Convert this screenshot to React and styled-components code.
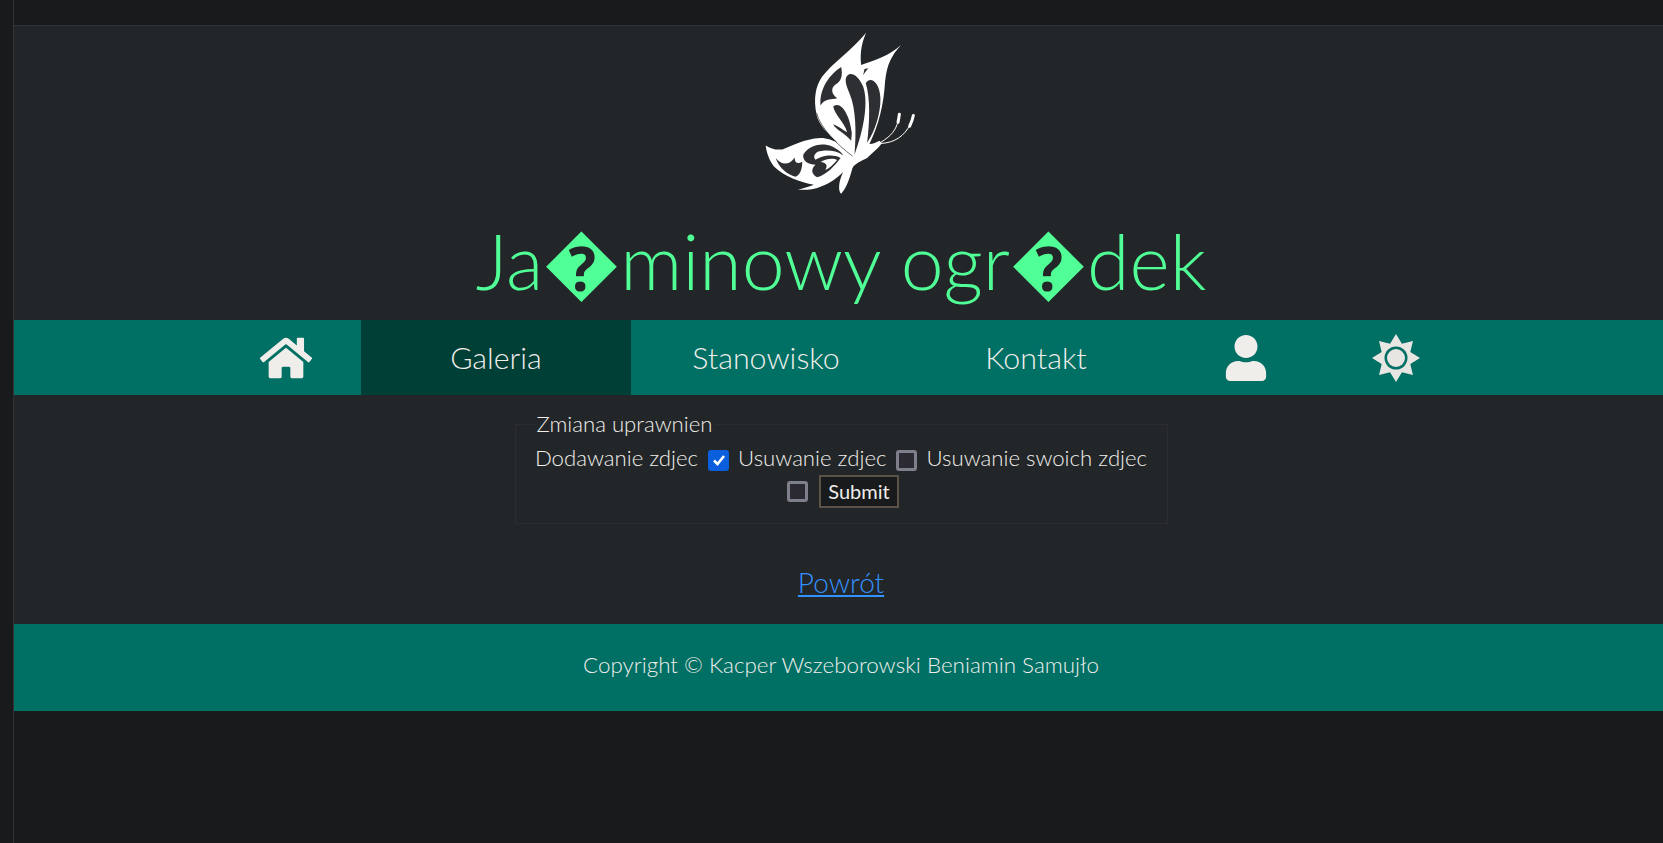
import React from 'react';
import styled, { createGlobalStyle } from 'styled-components';
import { FaHome, FaUser } from 'react-icons/fa';

const GlobalStyle = createGlobalStyle`
  html, body {
    margin: 0;
    height: 100%;
    overflow: hidden;
    background: #181a1b;
    font-family: Lato, "Liberation Sans", sans-serif;
    font-weight: 300;
    color: #e8e6e3;
  }
`;

const Frame = styled.div`
  width: 1655px;
  height: 843px;
  margin-left: 13px;
  padding-top: 25px;
  box-sizing: border-box;
  border-left: 1px solid #303436;
`;

const Page = styled.div`
  background: #222628;
  border-top: 1px solid #303436;
`;

const Header = styled.header`
  height: 294px;
  display: flex;
  flex-direction: column;
  align-items: center;
`;

const Logo = styled.svg`
  display: block;
  width: 153px;
  height: 167px;
  margin-top: 4px;
`;

const Title = styled.h1`
  margin: 17px 0 0;
  font-size: 77px;
  line-height: 92px;
  font-weight: 300;
  color: #51ff97;
  white-space: nowrap;
`;

const Nav = styled.nav`
  height: 75px;
  background: #006f64;
  display: flex;
  justify-content: center;
`;

const NavItem = styled.a`
  width: ${(p) => (p.$icon ? '150px' : '270px')};
  box-sizing: border-box;
  padding-bottom: ${(p) => (p.$icon ? '0' : '2px')};
  display: flex;
  align-items: center;
  justify-content: center;
  font-size: 30.4px;
  color: #f0eeeb;
  background: ${(p) => (p.$active ? '#003f35' : 'transparent')};
`;

const Content = styled.main`
  height: 229px;
  display: flex;
  flex-direction: column;
  align-items: center;
`;

const Form = styled.form`
  margin-top: 16px;
`;

const Fieldset = styled.fieldset`
  width: 653px;
  box-sizing: border-box;
  margin: 0;
  padding: 5px 9px 15px;
  border: 1px solid #2a2c2f;
  text-align: center;
  font-size: 22.2px;
  line-height: 31px;
  color: #f0eeeb;
`;

const Legend = styled.legend`
  margin-left: 10px;
  padding: 0 2px;
  text-align: left;
  font-size: 22.2px;
  line-height: 26px;
`;

const Check = styled.span`
  display: inline-flex;
  align-items: center;
  justify-content: center;
  vertical-align: middle;
  width: 21px;
  height: 21px;
  box-sizing: border-box;
  margin: 0 3px 0 4px;
  border-radius: 3px;
  border: ${(p) => (p.$checked ? 'none' : '3px solid #7f7f8c')};
  background: ${(p) => (p.$checked ? '#0b5fdc' : '#2b2a33')};
`;

const SubmitButton = styled.button`
  height: 33px;
  width: 80px;
  padding: 0;
  margin-left: 2px;
  background: #181a1b;
  color: #f0eeeb;
  border: 2px solid #5b5348;
  font-family: Lato, sans-serif;
  font-size: 20px;
  font-weight: 400;
  vertical-align: middle;
`;

const BackLink = styled.a`
  margin-top: 39px;
  font-size: 28px;
  line-height: 38px;
  color: #3391ff;
  text-decoration: underline;
`;

const Footer = styled.footer`
  height: 87px;
  box-sizing: border-box;
  padding-bottom: 6px;
  background: #006f64;
  display: flex;
  align-items: center;
  justify-content: center;
  font-size: 22.4px;
  color: #f0eeeb;
`;

function Butterfly() {
  return (
    <Logo viewBox="133 36 460 500">
      <path
        fill="#fff"
        d="M437 43 C425 70 418 100 422 140 C460 128 510 110 542 80 C515 110 500 135 494 190 C490 260 475 320 447 378 C458 378 468 372 478 368 L484 376 C472 392 458 402 440 420 C420 430 404 436 396 450 C388 480 378 510 362 527 C352 520 354 490 368 462 C350 480 330 495 300 506 C280 514 255 517 232 515 C250 510 268 505 280 500 C240 492 190 475 160 445 C145 425 138 405 135 382 C150 392 165 396 185 394 C215 385 250 362 300 360 C320 360 340 368 352 375 C320 345 295 320 288 290 C278 240 285 205 305 175 C335 135 395 95 437 43 Z"
      />
      <g fill="#2e2f32">
        <path d="M362 146 C328 168 296 210 300 262 C312 240 332 244 350 240 C332 228 330 208 346 198 C360 190 368 175 362 146 Z" />
        <path d="M376 180 C384 156 412 166 428 205 C444 250 432 330 402 410 C408 340 406 272 388 228 C380 208 374 195 376 180 Z" />
        <path d="M436 195 C450 172 478 192 480 240 C481 285 464 338 440 374 C448 312 450 240 436 195 Z" />
        <path d="M338 265 C360 246 388 288 394 345 L392 368 C376 346 344 334 338 318 C354 324 366 334 380 342 C370 310 344 292 338 265 Z" />
        <path d="M428 172 L432 152 L444 150 C436 158 432 165 428 172 Z" />
        <path d="M165 420 C180 440 205 445 222 418 C222 435 232 440 245 430 C245 450 240 470 225 476 C200 470 175 450 165 420 Z" />
        <path d="M248 410 C260 385 300 370 335 385 C355 395 365 405 368 412 C345 395 310 395 290 402 C280 410 278 418 285 425 C300 415 335 405 360 420 C345 440 320 470 290 478 C275 470 268 455 285 440 C265 440 245 430 248 410 Z" />
      </g>
      <path fill="#fff" d="M300 432 C320 420 340 420 350 426 C338 440 326 452 314 456 C324 442 316 434 300 432 Z" />
      <path fill="none" stroke="#222628" strokeWidth="2" d="M288 284 C300 330 350 380 396 414" />
      <g fill="none" stroke="#fff" strokeLinecap="round">
        <path strokeWidth="3" d="M482 372 C515 352 526 335 533 310" />
        <path strokeWidth="9" d="M533 312 C535 302 536 296 537 288" />
        <path strokeWidth="3" d="M482 376 C525 374 552 352 568 322" />
        <path strokeWidth="9" d="M568 324 C574 312 577 302 579 292" />
      </g>
    </Logo>
  );
}

function Sun() {
  const points = [];
  for (let i = 0; i < 16; i++) {
    const r = i % 2 ? 15.5 : 24;
    const a = (Math.PI * i) / 8;
    points.push(`${24 + r * Math.sin(a)},${24 - r * Math.cos(a)}`);
  }
  return (
    <svg width="48" height="48" viewBox="0 0 48 48">
      <polygon fill="#e8e6e3" points={points.join(' ')} />
      <circle cx="24" cy="24" r="11.5" fill="#006f64" />
      <circle cx="24" cy="24" r="9" fill="#e8e6e3" />
    </svg>
  );
}

function Tick() {
  return (
    <svg width="14" height="14" viewBox="0 0 14 14">
      <path d="M2 7.5 L5.5 11 L12 3" fill="none" stroke="#fff" strokeWidth="2.6" />
    </svg>
  );
}

export default function App() {
  return (
    <>
      <GlobalStyle />
      <Frame>
        <Page>
          <Header>
            <Butterfly />
            <Title>Ja�minowy ogr�dek</Title>
          </Header>
          <Nav>
            <NavItem $icon><FaHome size={52} /></NavItem>
            <NavItem $active>Galeria</NavItem>
            <NavItem>Stanowisko</NavItem>
            <NavItem>Kontakt</NavItem>
            <NavItem $icon><FaUser size={46} /></NavItem>
            <NavItem $icon><Sun /></NavItem>
          </Nav>
          <Content>
            <Form>
              <Fieldset>
                <Legend>Zmiana uprawnien</Legend>
                Dodawanie zdjec <Check $checked><Tick /></Check> Usuwanie zdjec <Check /> Usuwanie swoich zdjec <Check /> <SubmitButton type="button">Submit</SubmitButton>
              </Fieldset>
            </Form>
            <BackLink href="#">Powrót</BackLink>
          </Content>
          <Footer>Copyright © Kacper Wszeborowski Beniamin Samujło</Footer>
        </Page>
      </Frame>
    </>
  );
}
